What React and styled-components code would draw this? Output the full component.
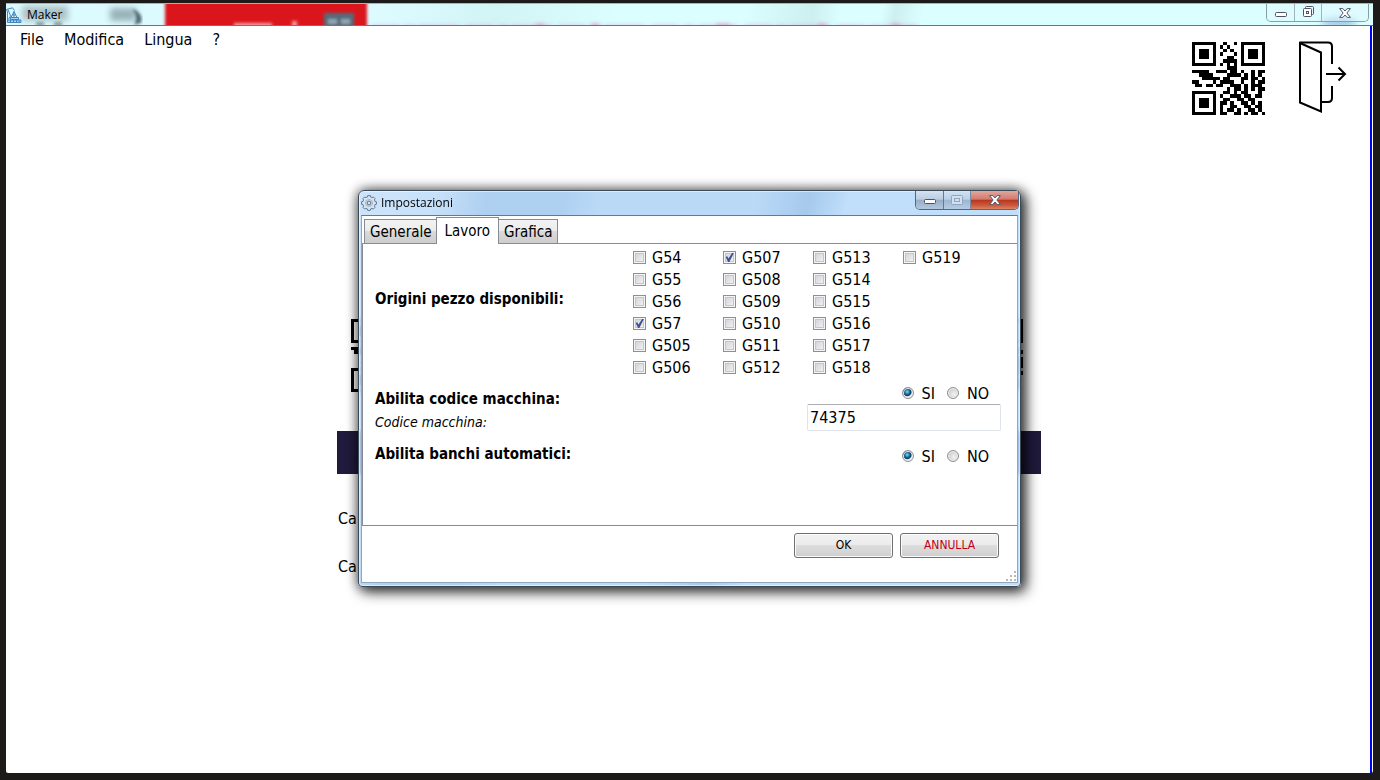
import React, { useState } from "react";
import styled, { createGlobalStyle } from "styled-components";

const GlobalStyle = createGlobalStyle`
  * { box-sizing: border-box; }
  body {
    margin: 0;
    background: #1c1b19;
    color: #000;
    font-family: "DejaVu Sans Condensed", "DejaVu Sans", Tahoma, sans-serif;
    font-size: 16px;
    line-height: 20px;
  }
  button, input { font: inherit; color: inherit; }
`;

const Desktop = styled.div`
  display: flex;
  min-height: 100vh;
  padding: 3px 7px 7px 6px;
`;

const MainWindow = styled.div`
  position: relative;
  flex: 1;
  display: flex;
  flex-direction: column;
  background: #fff;
  border-radius: 2px;
`;

const TitleBar = styled.header`
  position: relative;
  display: flex;
  align-items: flex-start;
  height: 23px;
  overflow: hidden;
  background: linear-gradient(100deg, #dcfbff 0 28%, #d2f4f5 36%, #dbfeff 45% 54%, #cdeff0 59%, #dbfeff 61% 64%, #cdeff0 65%, #dbfeff 67%);
  border-top: 1px solid #a8b4b4;
  border-bottom: 1px solid #68777a;
`;

const GlassBackdrop = styled.svg`
  position: absolute;
  inset: 0;
  width: 100%;
  height: 100%;
`;

const TitleText = styled.h1`
  position: relative;
  flex: 1;
  margin: 0;
  font-family: "Open Sans", "Noto Sans", sans-serif;
  font-size: 12px;
  font-weight: 400;
  line-height: 22px;
`;

const AppIcon = styled.svg`
  position: relative;
  flex: none;
  margin: 3px 5px 0 0;
`;

const Controls = styled.div`
  position: relative;
  display: flex;
  flex: none;
  height: 18px;
  margin-right: 4px;
  overflow: hidden;
  border: 1px solid #87a0a6;
  border-top: 0;
  border-radius: 0 0 5px 5px;
`;

const ControlButton = styled.button`
  display: grid;
  place-items: center;
  width: ${(p) => p.$width}px;
  padding: 0;
  border: 0;
  border-right: 1px solid #9db4b8;
  background: rgba(225, 250, 255, 0.5);
  &:last-child { border-right: 0; }
`;

const Client = styled.div`
  flex: 1;
  display: flex;
  flex-direction: column;
  margin-right: 1px;
  box-shadow: inset -2px 0 #0000f4;
`;

const TopRow = styled.div`
  display: flex;
  justify-content: space-between;
  align-items: flex-start;
`;

const Menu = styled.nav`
  display: flex;
  gap: 20px;
  padding: 4px 0 0 14px;
`;

const MenuLink = styled.a`
  color: #000;
  text-decoration: none;
`;

const QuickActions = styled.div`
  display: flex;
  gap: 32px;
  padding: 15px 25px 0 0;
`;

const IconButton = styled.button`
  display: block;
  padding: 0;
  border: 0;
  background: none;
`;

const Workspace = styled.main`
  width: 704px;
  max-width: 100%;
  margin: 204px auto 0;
`;

const CodeRow = styled.div`
  display: flex;
  justify-content: space-between;
  padding: 0 18px 0 14px;
`;

const Band = styled.div`
  height: 43px;
  margin: 39px 0 35px;
  background: #201a3c;
`;

const Caption = styled.p`
  margin: 0 0 28px 1px;
`;

const Overlay = styled.div`
  position: absolute;
  inset: 0;
  display: grid;
  place-items: center;
`;

const Dialog = styled.section`
  width: 663px;
  max-width: 100%;
  padding: 0 2px 3px;
  border: 1px solid #3d4a58;
  border-radius: 6px 6px 4px 4px;
  background: linear-gradient(105deg, rgba(196, 223, 250, 0.85) 0, rgba(190, 220, 250, 0.85) 10%, rgba(160, 200, 238, 0.85) 17% 27%, rgba(175, 211, 246, 0.85) 32% 52%, rgba(150, 192, 233, 0.85) 59%, rgba(182, 216, 250, 0.85) 64% 100%);
  backdrop-filter: blur(3px);
  box-shadow: inset 0 0 0 1px rgba(255, 255, 255, 0.5), 4px 4px 14px 1px rgba(0, 0, 0, 0.75), 0 0 12px 1px rgba(0, 0, 0, 0.45);
`;

const DialogTitle = styled.header`
  display: flex;
  align-items: flex-start;
  height: 24px;
  ${AppIcon} { margin: 4px 4px 0 0; }
  ${TitleText} { line-height: 24px; }
`;

const DialogControls = styled(Controls)`
  height: 19px;
  margin-right: -1px;
  border-color: #56687c;
`;

const DialogControl = styled(ControlButton)`
  border-color: #64788e;
  background: ${(p) =>
    p.$close
      ? "linear-gradient(#e0a79d 0, #d27a6c 46%, #b93420 50%, #cc5a3c 80%, #d98461)"
      : "linear-gradient(#d5e3f1 0, #bacde2 46%, #96adc6 50%, #b2c8de)"};
  opacity: ${(p) => (p.$muted ? 0.8 : 1)};
`;

const DialogBody = styled.div`
  background: #fff;
  border: 1px solid #8fa6bc;
  border-top-color: #67798c;
`;

const Tabs = styled.div`
  position: relative;
  z-index: 1;
  display: flex;
  align-items: flex-end;
  height: 28px;
  margin-bottom: -1px;
  padding-left: 2px;
`;

const Tab = styled.button`
  height: ${(p) => (p.$active ? 27 : 25)}px;
  margin-left: ${(p) => (p.$active ? -2 : 0)}px;
  padding: ${(p) => (p.$active ? "0 8px" : "2px 5px 0")};
  border: 1px solid #888a94;
  border-left-width: ${(p) => (p.$joined ? 0 : 1)}px;
  border-bottom-width: ${(p) => (p.$active ? 0 : 1)}px;
  background: ${(p) => (p.$active ? "#fff" : "linear-gradient(#f3f3f3 0, #ebebeb 48%, #dadada 50%, #cdcdcd)")};
  font-size: 15px;
`;

const Panel = styled.div`
  min-height: 283px;
  padding: 3px 16px 0 12px;
  border: 1px solid #888a94;
  border-right: 0;
`;

const SettingRow = styled.div`
  display: flex;
  justify-content: space-between;
`;

const Labels = styled.div`
  display: flex;
  flex-direction: column;
`;

const Label = styled.div`
  font-size: 15px;
  font-weight: 700;
`;

const SubLabel = styled.label`
  margin-top: 3px;
  font-size: 14px;
  font-style: italic;
`;

const OriginsLabel = styled(Label)`
  padding-top: 42px;
`;

const OriginGrid = styled.div`
  display: grid;
  grid-template-rows: repeat(6, 22px);
  grid-auto-columns: 90px;
  grid-auto-flow: column;
  padding-right: 8px;
`;

const Option = styled.label`
  display: flex;
  align-items: center;
  gap: ${(p) => p.$gap}px;
`;

const CheckBox = styled.input`
  appearance: none;
  display: grid;
  place-items: center;
  width: 13px;
  height: 13px;
  margin: 0;
  border: 1px solid #8e8f8f;
  background: linear-gradient(135deg, #cbcfd5, #f6f6f6);
  box-shadow: inset 0 0 0 1px #f4f4f4, inset 0 0 0 2px #c3c6ca;
  &:checked::before {
    content: "";
    width: 9px;
    height: 9px;
    background: #3d5295;
    clip-path: polygon(8% 45%, 24% 36%, 40% 62%, 78% 0, 98% 0, 48% 100%, 34% 100%);
  }
`;

const Radio = styled.input`
  appearance: none;
  width: 12px;
  height: 12px;
  margin: 0;
  border: 1px solid #8e8f8f;
  border-radius: 50%;
  background: radial-gradient(circle at 60% 60%, #f2f2f2, #cfcfcf 65%);
  box-shadow: inset 0 0 0 1px #f2f2f2;
  &:checked {
    background: radial-gradient(circle at 42% 38%, #8fdcf8 0, #2a86b8 22%, #0c3a5c 45%, #e8eef2 58%);
  }
`;

const RadioGroup = styled.div`
  display: flex;
  justify-content: flex-end;
  gap: 12px;
  padding-right: 12px;
  line-height: 21px;
`;

const CodeInput = styled.input`
  display: block;
  width: 194px;
  height: 27px;
  padding: 0 2px;
  border: 1px solid #dfe3ea;
  border-top-color: #abadb3;
  border-radius: 2px;
  background: #fff;
`;

const MachineRow = styled(SettingRow)`
  padding-top: 4px;
  ${Labels} { padding-top: 6px; }
`;

const BenchRow = styled(SettingRow)`
  padding-top: 12px;
  ${RadioGroup} { padding-top: 2px; }
`;

const Footer = styled.footer`
  position: relative;
  display: flex;
  justify-content: flex-end;
  gap: 7px;
  padding: 7px 18px 24px;
`;

const PushButton = styled.button`
  width: 99px;
  height: 25px;
  padding: 0;
  border: 1px solid #707070;
  border-radius: 3px;
  background: linear-gradient(#f2f2f2 0, #ebebeb 48%, #dddddd 50%, #cfcfcf);
  box-shadow: inset 0 0 0 1px #fbfbfb;
  color: ${(p) => (p.$danger ? "#c00018" : "#000")};
  font-size: 12px;
`;

const Grip = styled.svg`
  position: absolute;
  right: 1px;
  bottom: 1px;
`;

const MENU_CODE = [
  "111111100100101111111",
  "100000101010001000001",
  "101110100101001011101",
  "101110101000101011101",
  "101110100011001011101",
  "100000100111101000001",
  "111111101010101111111",
  "000000000011100000000",
  "111110011101101001011",
  "001111000011110101010",
  "000111110110001101101",
  "110000101111001001011",
  "011011011001110101110",
  "000000000010110101011",
  "111111100110101100010",
  "100000101001110110110",
  "101110100110011011000",
  "101110101101001101010",
  "101110101001100110110",
  "100000101011010011010",
  "111111101100110101101",
];

const LEFT_CODE = MENU_CODE.map((row, y) => {
  const edge = { 8: "11", 9: "01", 10: "00", 11: "00", 12: "00" }[y];
  return edge ? edge + row.slice(2) : row;
});

const RIGHT_CODE = MENU_CODE.map((row, y) =>
  y < 7 ? row : row.slice(0, 20) + ([9, 11, 12, 13, 15].includes(y) ? "1" : "0")
);

const toPath = (rows) =>
  rows.map((row, y) =>
    [...row].map((cell, x) => (cell === "1" ? `M${x} ${y}h1v1h-1z` : "")).join("")
  ).join("");

function QrCode({ rows }) {
  return (
    <svg width="73" height="73" viewBox="0 0 21 21" shapeRendering="crispEdges" display="block">
      <path d={toPath(rows)} fill="#000" />
    </svg>
  );
}

function MinimizeIcon() {
  return (
    <svg width="13" height="12" viewBox="0 0 13 12">
      <rect x="1.5" y="5.5" width="11" height="4" rx="1" fill="#fff" stroke="#4e5262" />
    </svg>
  );
}

function RestoreIcon() {
  return (
    <svg width="13" height="13" viewBox="0 0 13 13" fill="none" stroke="#4e5262">
      <rect x="3.5" y="0.5" width="8" height="8" rx="1" fill="#eefcff" />
      <rect x="1.5" y="2.5" width="8" height="8" rx="1" fill="#fff" />
      <rect x="4.5" y="5.5" width="2" height="2" />
    </svg>
  );
}

function MaximizeIcon() {
  return (
    <svg width="12" height="10" viewBox="0 0 12 10" fill="none" stroke="#8798ad">
      <rect x="0.5" y="0.5" width="11" height="9" rx="1" fill="#d6e2ee" />
      <rect x="3.5" y="3.5" width="5" height="3" />
    </svg>
  );
}

function CloseIcon() {
  return (
    <svg width="12" height="10" viewBox="0 0 12 10">
      <path d="M.6.6h3.3L6 3 8.100.6h3.300L7.900 5l3.500 4.400H8.100L6 7 3.900 9.400H.6L4.100 5z" fill="#fff" stroke="#53586a" strokeLinejoin="round" />
    </svg>
  );
}

function CraneIcon() {
  return (
    <AppIcon width="16" height="16" viewBox="0 0 16 16" fill="none" stroke="#4284c0">
      <path d="M1.500 15V5L.5 2.500 6.500.8l2 2.700M2 2.500 4.500 9 2.500 12" />
      <path d="M5 10.500 8 4.500l3 6M6.500 8h3M8 4.500v6" />
      <path d="M4.500 10.500h8v2h-8zM1.500 13h13.500v2.500H1.500zM4.500 13v2M7.500 13v2M10.500 13v2M13 13v2" fill="#a9d2ef" />
    </AppIcon>
  );
}

const GEAR_POINTS = Array.from({ length: 8 }, (_, i) =>
  [[-15, 6.2], [-10, 7.5], [10, 7.5], [15, 6.2]].map(([offset, radius]) => {
    const angle = ((i * 45 + offset) * Math.PI) / 180;
    return `${(8 + radius * Math.sin(angle)).toFixed(2)},${(8 - radius * Math.cos(angle)).toFixed(2)}`;
  }).join(" ")
).join(" ");

function GearIcon() {
  return (
    <AppIcon width="16" height="16" viewBox="0 0 16 16" fill="none" stroke="#66788c">
      <polygon points={GEAR_POINTS} strokeLinejoin="round" fill="#d5e4f2" />
      <circle cx="8" cy="8" r="3.500" stroke="#a3b3c3" />
      <circle cx="8" cy="8" r="1.900" stroke="#5d7084" />
    </AppIcon>
  );
}

function ExitIcon() {
  return (
    <svg width="50" height="74" viewBox="0 0 50 74" fill="none" stroke="#000" strokeWidth="2" display="block">
      <path d="M3 2 24 11.500v59L3 61.500z" />
      <path d="M3 1.500h28q4 0 4 4V23M35 45v12q0 4-4 4h-7" />
      <path d="M29 33h19M41.500 26.500 48 33l-6.500 6.500" />
    </svg>
  );
}

function Backdrop() {
  return (
    <GlassBackdrop aria-hidden="true">
      <defs>
        <filter id="soft" x="-30%" y="-60%" width="160%" height="220%">
          <feGaussianBlur stdDeviation="3" />
        </filter>
        <filter id="edge" x="-10%" y="-30%" width="120%" height="160%">
          <feGaussianBlur stdDeviation="1.600" />
        </filter>
        <filter id="haze" filterUnits="userSpaceOnUse" x="350" y="0" width="600" height="40">
          <feGaussianBlur stdDeviation="2" />
        </filter>
      </defs>
      <rect x="16" y="2" width="46" height="15" fill="#96a9ae" opacity=".7" filter="url(#soft)" />
      <path d="M30 18h8v4h-8zM48 18h8v4h-8z" fill="#4f646c" opacity=".6" filter="url(#edge)" />
      <rect x="104" y="4" width="26" height="13" fill="#6b828b" opacity=".6" filter="url(#soft)" />
      <path d="M126 5q12 4 9 14l-7 2q5-8-2-16z" fill="#263e47" opacity=".75" filter="url(#edge)" />
      <rect x="159" y="-8" width="202" height="44" fill="#da141c" filter="url(#edge)" />
      <g filter="url(#edge)">
        <path d="M228 19h38v5h-38zM286 17h5v7h-5z" fill="#ffd0d2" opacity=".7" />
        <rect x="318" y="9" width="30" height="14" fill="#526a79" />
        <path d="M322 15h9v5h-9zM335 15h9v5h-9z" fill="#a1b5c2" opacity=".8" />
      </g>
      <path d="M366 23h546" stroke="#dda0ea" strokeWidth="4" strokeDasharray="28 4 12 3 40 6" opacity=".6" filter="url(#haze)" />
      <path d="M530 22h8M585 22h8M710 22h14M812 22h8M886 22h8" stroke="#d8608c" strokeWidth="4" opacity=".5" filter="url(#haze)" />
      <ellipse cx="1333" cy="18" rx="18" ry="5" fill="#89b0d8" opacity=".7" filter="url(#soft)" />
    </GlassBackdrop>
  );
}

const ORIGINS = [
  "G54", "G55", "G56", "G57", "G505", "G506",
  "G507", "G508", "G509", "G510", "G511", "G512",
  "G513", "G514", "G515", "G516", "G517", "G518", "G519",
];

const TABS = ["Generale", "Lavoro", "Grafica"];

function YesNo({ name, label }) {
  return (
    <RadioGroup role="radiogroup" aria-label={label}>
      <Option $gap={8}>
        <Radio type="radio" name={name} defaultChecked />
        SI
      </Option>
      <Option $gap={8}>
        <Radio type="radio" name={name} />
        NO
      </Option>
    </RadioGroup>
  );
}

export default function App() {
  const [tab, setTab] = useState("Lavoro");
  return (
    <Desktop>
      <GlobalStyle />
      <MainWindow>
        <TitleBar>
          <Backdrop />
          <CraneIcon />
          <TitleText>Maker</TitleText>
          <Controls>
            <ControlButton $width={28} aria-label="Riduci a icona"><MinimizeIcon /></ControlButton>
            <ControlButton $width={27} aria-label="Ripristina"><RestoreIcon /></ControlButton>
            <ControlButton $width={46} aria-label="Chiudi"><CloseIcon /></ControlButton>
          </Controls>
        </TitleBar>
        <Client>
          <TopRow>
            <Menu>
              {["File", "Modifica", "Lingua", "?"].map((item) => (
                <MenuLink href="#" key={item}>{item}</MenuLink>
              ))}
            </Menu>
            <QuickActions>
              <IconButton aria-label="Codice QR"><QrCode rows={MENU_CODE} /></IconButton>
              <IconButton aria-label="Esci"><ExitIcon /></IconButton>
            </QuickActions>
          </TopRow>
          <Workspace>
            <CodeRow>
              <QrCode rows={LEFT_CODE} />
              <QrCode rows={RIGHT_CODE} />
            </CodeRow>
            <Band />
            <Caption>Ca</Caption>
            <Caption>Ca</Caption>
          </Workspace>
        </Client>
        <Overlay>
          <Dialog role="dialog" aria-label="Impostazioni">
            <DialogTitle>
              <GearIcon />
              <TitleText as="h2">Impostazioni</TitleText>
              <DialogControls>
                <DialogControl $width={28} aria-label="Riduci a icona"><MinimizeIcon /></DialogControl>
                <DialogControl $width={27} $muted disabled aria-label="Ingrandisci"><MaximizeIcon /></DialogControl>
                <DialogControl $width={47} $close aria-label="Chiudi"><CloseIcon /></DialogControl>
              </DialogControls>
            </DialogTitle>
            <DialogBody>
              <Tabs role="tablist">
                {TABS.map((name, i) => (
                  <Tab
                    key={name}
                    role="tab"
                    aria-selected={tab === name}
                    $active={tab === name}
                    $joined={i > 0 && tab === TABS[i - 1]}
                    onClick={() => setTab(name)}
                  >
                    {name}
                  </Tab>
                ))}
              </Tabs>
              <Panel>
                <SettingRow>
                  <OriginsLabel>Origini pezzo disponibili:</OriginsLabel>
                  <OriginGrid>
                    {ORIGINS.map((name) => (
                      <Option $gap={6} key={name}>
                        <CheckBox type="checkbox" defaultChecked={name === "G57" || name === "G507"} />
                        {name}
                      </Option>
                    ))}
                  </OriginGrid>
                </SettingRow>
                <MachineRow>
                  <Labels>
                    <Label>Abilita codice macchina:</Label>
                    <SubLabel htmlFor="machine-code">Codice macchina:</SubLabel>
                  </Labels>
                  <div>
                    <YesNo name="machine" label="Abilita codice macchina" />
                    <CodeInput id="machine-code" defaultValue="74375" />
                  </div>
                </MachineRow>
                <BenchRow>
                  <Label>Abilita banchi automatici:</Label>
                  <YesNo name="benches" label="Abilita banchi automatici" />
                </BenchRow>
              </Panel>
              <Footer>
                <PushButton>OK</PushButton>
                <PushButton $danger>ANNULLA</PushButton>
                <Grip width="10" height="10" viewBox="0 0 10 10" fill="#b8b8b8" aria-hidden="true">
                  <path d="M8 0h2v2H8zM4 4h2v2H4zM8 4h2v2H8zM0 8h2v2H0zM4 8h2v2H4zM8 8h2v2H8z" />
                </Grip>
              </Footer>
            </DialogBody>
          </Dialog>
        </Overlay>
      </MainWindow>
    </Desktop>
  );
}
